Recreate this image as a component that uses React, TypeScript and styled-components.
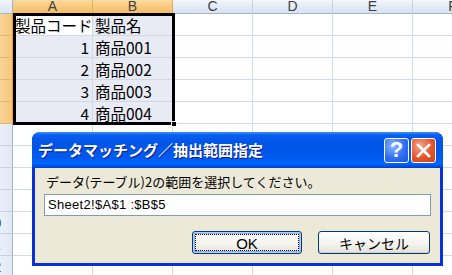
import React from "react";
import styled, { createGlobalStyle } from "styled-components";

const Global = createGlobalStyle`
  html, body { margin: 0; padding: 0; background: #ffffff; overflow: hidden; }
  body { width: 452px; height: 275px; }
  * { box-sizing: border-box; }
`;

const Page = styled.div`
  position: relative;
  width: 452px;
  height: 275px;
  overflow: hidden;
  font-family: "Noto Sans CJK JP", "Liberation Sans", sans-serif;
`;

const Sheet = styled.div`
  display: grid;
  grid-template-columns: 13px repeat(6, 80px);
  grid-template-rows: 14px repeat(12, 22px);
  width: 493px;
`;

const Corner = styled.div`
  background: linear-gradient(#f1f5fb, #dbe4f2);
  border-right: 1px solid #9eb6ce;
  border-bottom: 1px solid #9eb6ce;
`;

const ColHeader = styled.div<{ $selected?: boolean }>`
  display: flex;
  justify-content: center;
  align-items: center;
  font-family: "Liberation Sans", "DejaVu Sans", sans-serif;
  font-size: 14px;
  line-height: 13px;
  color: #404040;
  background: ${(p) =>
    p.$selected
      ? "linear-gradient(#fbdba0, #f7c77a 60%, #f5bd63)"
      : "linear-gradient(#f4f7fc, #e1e9f5 60%, #d8e2f1)"};
  border-right: 1px solid ${(p) => (p.$selected ? "#e3ad5e" : "#c5d2e3")};
  border-bottom: 1px solid ${(p) => (p.$selected ? "#f29a3a" : "#9eb6ce")};
`;

const RowHeader = styled.div<{ $selected?: boolean }>`
  overflow: hidden;
  background: ${(p) =>
    p.$selected
      ? "linear-gradient(to right, #f9d499, #f7c67a)"
      : "linear-gradient(to right, #eaf0f9, #e1e8f4)"};
  border-right: 1px solid ${(p) => (p.$selected ? "#f29a3a" : "#9eb6ce")};
  border-bottom: 1px solid ${(p) => (p.$selected ? "#e6b56c" : "#c5d2e3")};
`;

const RowNum = styled.span`
  display: block;
  width: 30px;
  margin-left: -22px;
  text-align: center;
  font-family: "Liberation Sans", sans-serif;
  font-size: 15px;
  line-height: 21px;
  color: #404040;
`;

const Cell = styled.div<{ $align?: "left" | "right"; $fill?: string }>`
  display: flex;
  align-items: center;
  justify-content: ${(p) => (p.$align === "right" ? "flex-end" : "flex-start")};
  padding: 1px 3px 0 2px;
  font-size: 15.5px;
  line-height: 21px;
  color: #000;
  white-space: nowrap;
  overflow: hidden;
  background: ${(p) => p.$fill ?? "#ffffff"};
  border-right: 1px solid #d0d7e5;
  border-bottom: 1px solid #d0d7e5;
`;

const SelectionFrame = styled.div`
  position: absolute;
  left: 13px;
  top: 13px;
  width: 162px;
  height: 112px;
  border: 3px solid #000;
  pointer-events: none;
`;

const FillHandle = styled.div`
  position: absolute;
  left: 171px;
  top: 121px;
  width: 6px;
  height: 6px;
  background: #000;
  border: 1px solid #fff;
`;

/* ---------- Dialog ---------- */

const Dialog = styled.div`
  position: absolute;
  left: 32px;
  top: 132px;
  width: 411px;
  height: 134px;
  display: flex;
  flex-direction: column;
  background: #0831d9;
  border-radius: 8px 8px 0 0;
  overflow: hidden;
`;

const TitleBar = styled.div`
  height: 36px;
  flex: none;
  display: flex;
  align-items: center;
  padding: 0 7px 0 6px;
  gap: 2px;
  background: linear-gradient(
    #3d95ff 0%,
    #0a5ff0 8%,
    #0054e6 30%,
    #0058ee 70%,
    #0066ff 88%,
    #0052e2 94%,
    #003dd6 100%
  );
`;

const Title = styled.div`
  flex: 1;
  color: #ffffff;
  font-size: 15px;
  font-weight: bold;
  line-height: 20px;
  padding-bottom: 1px;
  white-space: nowrap;
  text-shadow: 1px 1px 0 #0a1e8c;
`;

const CaptionButton = styled.div<{ $kind: "help" | "close" }>`
  width: 25px;
  height: 25px;
  flex: none;
  display: flex;
  align-items: center;
  justify-content: center;
  border: 1px solid #ffffff;
  border-radius: 3px;
  color: #fff;
  font-family: "Liberation Sans", sans-serif;
  font-weight: bold;
  font-size: 22px;
  line-height: 1;
  background: ${(p) =>
    p.$kind === "close"
      ? "radial-gradient(circle at 35% 30%, #f3a58a, #e2552d 55%, #c9401c)"
      : "radial-gradient(circle at 35% 30%, #8db7ff, #2f6ff2 55%, #1c56e0)"};
`;

const Body = styled.div`
  flex: 1;
  margin: 0 3px 3px;
  background: #ece9d8;
  display: flex;
  flex-direction: column;
  padding: 4px 9px 0 9px;
`;

const Label = styled.div`
  font-size: 13px;
  line-height: 20px;
  padding-left: 2px;
  color: #000;
  white-space: nowrap;
`;

const Field = styled.div`
  margin-top: 2px;
  height: 22px;
  background: #fff;
  border: 1px solid #7f9db9;
  font-family: "Liberation Sans", sans-serif;
  font-size: 13px;
  line-height: 20px;
  padding-left: 3px;
  letter-spacing: 0.3px;
  color: #000;
`;

const ButtonRow = styled.div`
  margin-top: 15px;
  display: flex;
  justify-content: flex-end;
  gap: 16px;
  padding-right: 1px;
`;

const Button = styled.div<{ $default?: boolean; $w: number }>`
  width: ${(p) => p.$w}px;
  height: 23px;
  display: flex;
  align-items: center;
  justify-content: center;
  border: 1px solid #003c74;
  border-radius: 3px;
  background: linear-gradient(#ffffff, #f4f3ee 60%, #e3e0d5);
  box-shadow: ${(p) =>
    p.$default ? "inset 0 0 0 1px #b8cdf5, inset 0 0 0 2px #8fadf0" : "inset 0 -1px 0 #d6d0c5"};
  font-size: 14px;
  color: #000;
  padding: 2px;
`;

const Focus = styled.div`
  flex: 1;
  align-self: stretch;
  display: flex;
  align-items: center;
  justify-content: center;
  border: 1px dotted #000;
  font-family: "Liberation Sans", sans-serif;
  font-size: 15px;
  padding-top: 1px;
`;

const ButtonText = styled.span`
  font-size: 14px;
  padding-top: 1px;
`;

const CloseX = () => (
  <svg width="17" height="17" viewBox="0 0 17 17">
    <path d="M3 3 L14 14 M14 3 L3 14" stroke="#ffffff" strokeWidth="2.6" strokeLinecap="square" />
  </svg>
);

const cols = ["A", "B", "C", "D", "E", "F"];
const data: [string, string][] = [
  ["製品コード", "製品名"],
  ["1", "商品001"],
  ["2", "商品002"],
  ["3", "商品003"],
  ["4", "商品004"],
];

export default function App() {
  const rows = Array.from({ length: 12 }, (_, i) => i + 1);
  return (
    <Page>
      <Global />
      <Sheet>
        <Corner />
        {cols.map((c, i) => (
          <ColHeader key={c} $selected={i < 2}>
            {c}
          </ColHeader>
        ))}
        {rows.map((r) => {
          const inSel = r <= 5;
          const rec = data[r - 1];
          return (
            <React.Fragment key={r}>
              <RowHeader $selected={inSel}>
                <RowNum>{r}</RowNum>
              </RowHeader>
              {cols.map((c, ci) => {
                let text = "";
                let align: "left" | "right" = "left";
                let fill: string | undefined;
                if (rec && ci < 2) {
                  text = rec[ci];
                  if (ci === 0 && r > 1) align = "right";
                  fill = r === 1 && ci === 0 ? "#ffffff" : "#e8ebf4";
                }
                return (
                  <Cell key={c} $align={align} $fill={fill}>
                    {text}
                  </Cell>
                );
              })}
            </React.Fragment>
          );
        })}
      </Sheet>
      <SelectionFrame />
      <FillHandle />

      <Dialog>
        <TitleBar>
          <Title>データマッチング／抽出範囲指定</Title>
          <CaptionButton $kind="help">?</CaptionButton>
          <CaptionButton $kind="close">
            <CloseX />
          </CaptionButton>
        </TitleBar>
        <Body>
          <Label>データ(テーブル)2の範囲を選択してください。</Label>
          <Field>Sheet2!$A$1 :$B$5</Field>
          <ButtonRow>
            <Button $default $w={110}>
              <Focus>OK</Focus>
            </Button>
            <Button $w={112}>
              <ButtonText>キャンセル</ButtonText>
            </Button>
          </ButtonRow>
        </Body>
      </Dialog>
    </Page>
  );
}
